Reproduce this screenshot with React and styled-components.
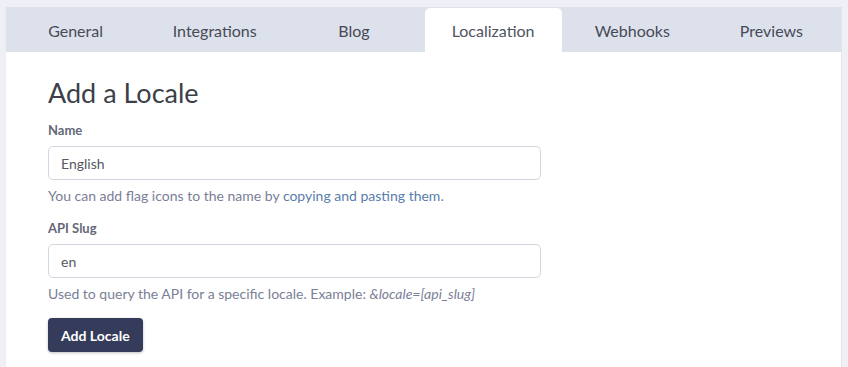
import React from 'react'
import styled, { createGlobalStyle } from 'styled-components'

const GlobalStyle = createGlobalStyle`
  html, body {
    margin: 0;
    padding: 0;
    background: #eef0f6;
    font-family: Lato, "Open Sans", sans-serif;
  }
`

const tabs = ['General', 'Integrations', 'Blog', 'Localization', 'Webhooks', 'Previews']

const App = () => {
  return (
    <>
      <GlobalStyle />
      <Page>
        <Panel>
          <TabBar>
            {tabs.map((t) => (
              <Tab key={t} $active={t === 'Localization'}>{t}</Tab>
            ))}
          </TabBar>
          <Body>
            <Heading>Add a Locale</Heading>
            <Field>
              <Label>Name</Label>
              <Input defaultValue="English" />
              <Help>
                You can add flag icons to the name by <HelpLink href="#">copying and pasting them</HelpLink>.
              </Help>
            </Field>
            <Field>
              <Label>API Slug</Label>
              <Input defaultValue="en" />
              <Help>
                Used to query the API for a specific locale. Example: <em>&amp;locale=[api_slug]</em>
              </Help>
            </Field>
            <Button>Add Locale</Button>
          </Body>
        </Panel>
      </Page>
    </>
  )
}

const Page = styled.div`
  padding: 7px 6px 0 5px;
  height: 100vh;
  box-sizing: border-box;
  display: flex;
  flex-direction: column;
`

const Panel = styled.div`
  background: #fff;
  flex: 1;
  border-right: 1px solid #e2e4ec;
  border-left: 1px solid #eceef4;
  display: flex;
  flex-direction: column;
`

const TabBar = styled.div`
  display: grid;
  grid-template-columns: repeat(6, 1fr);
  background: #dde1ec;
  height: 45px;
  padding-top: 1px;
  box-sizing: border-box;
`

const Tab = styled.div`
  display: flex;
  align-items: center;
  justify-content: center;
  font-size: 16px;
  color: ${(p) => (p.$active ? '#505360' : '#474a56')};
  margin: 0 1px;
  border-radius: 5px 5px 0 0;
  background: ${(p) => (p.$active ? '#fff' : 'transparent')};
`

const Body = styled.div`
  padding: 25px 42px 0;
  display: flex;
  flex-direction: column;
  align-items: flex-start;
`

const Heading = styled.h1`
  margin: 0 0 13px;
  font-size: 27px;
  font-weight: 400;
  color: #3d3f48;
  line-height: 32px;
`

const Field = styled.div`
  display: flex;
  flex-direction: column;
  width: 493px;
  margin-bottom: 15px;
`

const Label = styled.label`
  font-size: 13px;
  font-weight: 700;
  color: #646878;
  margin-bottom: 8px;
  line-height: 16px;
`

const Input = styled.input`
  height: 34px;
  box-sizing: border-box;
  border: 1px solid #d3d6de;
  border-radius: 5px;
  padding: 0 12px;
  font-family: inherit;
  font-size: 14px;
  color: #555862;
  outline: none;
`

const Help = styled.div`
  margin-top: 7px;
  font-size: 14px;
  color: #7a7e96;
  line-height: 18px;

  em {
    font-style: italic;
  }
`

const HelpLink = styled.a`
  color: #5a7dab;
  text-decoration: none;
`

const Button = styled.button`
  height: 34px;
  padding: 0 13px;
  background: #353b5a;
  color: #fff;
  border: none;
  border-radius: 4px;
  font-family: inherit;
  font-size: 14px;
  font-weight: 700;
  box-shadow: 0 1px 3px rgba(0, 0, 0, 0.25);
`

export default App
